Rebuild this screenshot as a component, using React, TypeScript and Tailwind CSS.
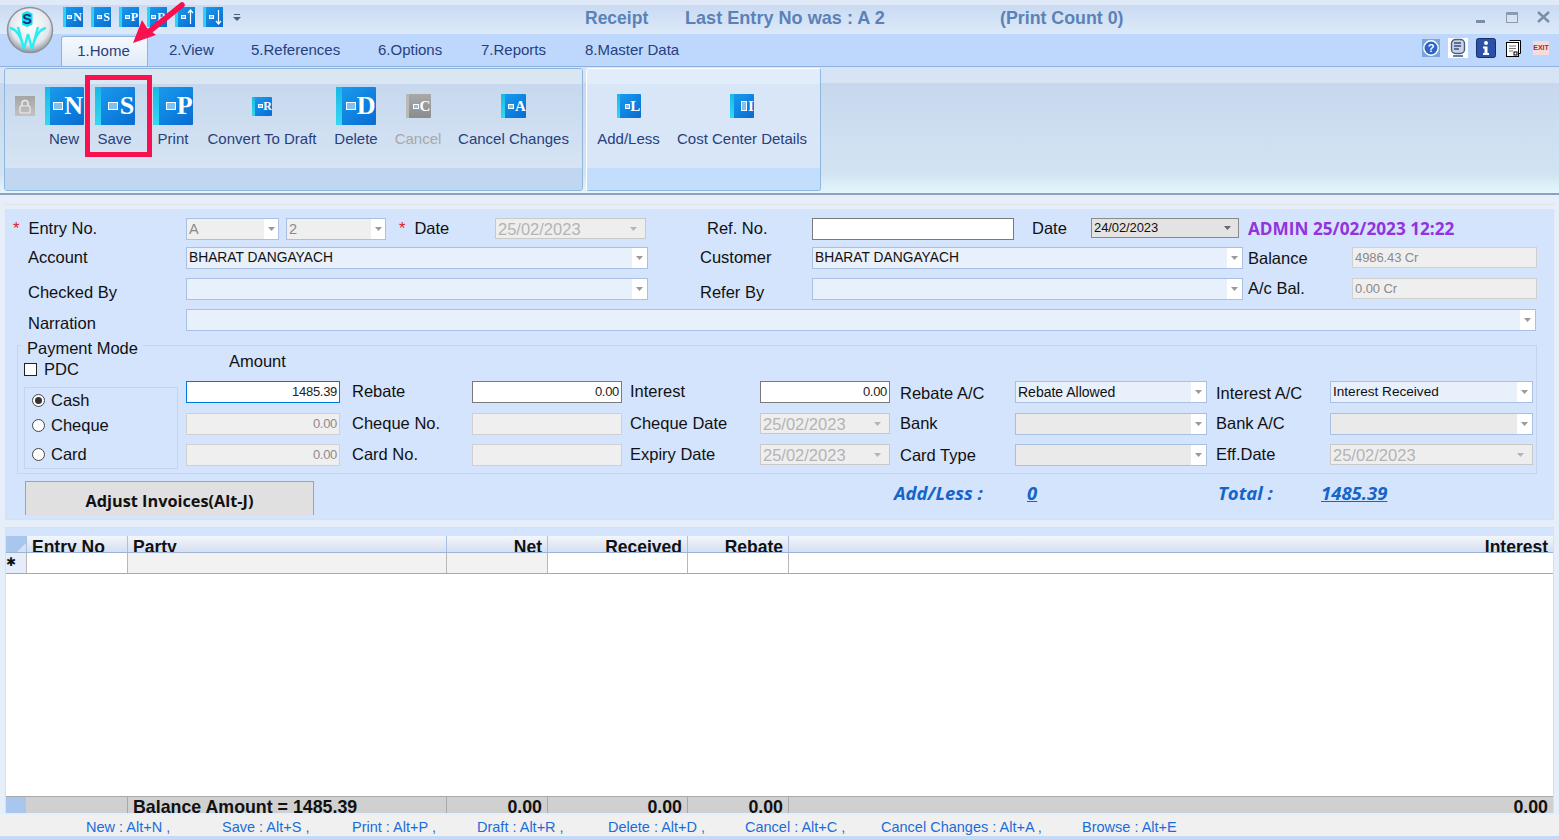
import type { ReactNode } from "react";

function Caret({ color = "#9a9a9a" }: { color?: string }) {
  return (
    <svg width="7" height="4" viewBox="0 0 7 4">
      <path d="M0 0h7L3.5 4z" fill={color} />
    </svg>
  );
}

// blue book icon from the ribbon, w/h given as classes by the caller
function BookIcon({ box, letter, text, mark, grey }: { box: string; letter?: string; text: string; mark: string; grey?: boolean }) {
  return (
    <div className={`${box} relative flex items-center justify-end overflow-hidden rounded-[1px] ${grey ? "bg-gradient-to-b from-[#a9a9a9] to-[#8b8b8b]" : "bg-gradient-to-br from-[#1c9dee] via-[#0f86e2] to-[#0a6bd0]"}`}>
      <div className={`absolute inset-y-0 left-0 w-[15%] ${grey ? "bg-[#b9b9b9]" : "bg-gradient-to-b from-[#17b8e8] to-[#35d8f0]"}`} />
      <div className={`${mark} mr-[3%] shrink-0 border border-white bg-[#7fc0f2]`} />
      {letter && <span className={`${text} mr-[1%] font-['Liberation_Serif',serif] font-bold leading-none text-white`}>{letter}</span>}
    </div>
  );
}

function QatIcon({ letter, arrow }: { letter?: string; arrow?: "up" | "down" }) {
  return (
    <div className="relative flex h-5 w-5 items-center justify-end bg-gradient-to-br from-[#1c9dee] to-[#0a6bd0]">
      <div className="absolute inset-y-0 left-0 w-[3px] bg-[#2fd2f2]" />
      <div className="mr-px h-[4px] w-[5px] border border-white bg-[#7fc0f2]" />
      {letter && <span className="mr-px font-['Liberation_Serif',serif] text-[12px] font-bold leading-none text-white">{letter}</span>}
      {arrow && (
        <svg width="7" height="16" viewBox="0 0 7 16" className="mr-px">
          <path d={arrow === "up" ? "M3.5 1v14M1 4l2.5-3L6 4" : "M3.5 1v14M1 12l2.5 3L6 12"} stroke="#fff" strokeWidth="1.2" fill="none" />
        </svg>
      )}
    </div>
  );
}

function RibbonBtn({ w, icon, label, dim }: { w: string; icon: ReactNode; label: string; dim?: boolean }) {
  return (
    <div className={`${w} flex shrink-0 flex-col items-center`}>
      <div className="flex h-[40px] items-center justify-center">{icon}</div>
      <div className={`mt-[4px] whitespace-nowrap text-[15px] leading-[18px] ${dim ? "text-[#a8a8a8]" : "text-[#27407c]"}`}>{label}</div>
    </div>
  );
}

function Label({ w, pl, children, color = "text-[#111]" }: { w: string; pl: string; children: ReactNode; color?: string }) {
  return <div className={`${w} ${pl} ${color} shrink-0 whitespace-nowrap text-[16.5px] leading-[22px]`}>{children}</div>;
}

// blue tinted combo with the white button strip on the right
function Combo({ w, h = "h-[22px]", value, grey, text = "text-[13.8px]" }: { w: string; h?: string; value?: string; grey?: boolean; text?: string }) {
  return (
    <div className={`${w} ${h} flex shrink-0 items-stretch border border-[#a9c0e2] ${grey ? "bg-[#eaeaea]" : "bg-[#e8f0fc]"}`}>
      <div className={`flex-1 overflow-hidden whitespace-nowrap pl-[2px] leading-[20px] text-[#111] ${text}`}>{value}</div>
      <div className="flex w-[15px] items-center justify-center bg-white">
        <Caret />
      </div>
    </div>
  );
}

function DateBox({ w, value }: { w: string; value: string }) {
  return (
    <div className={`${w} flex h-[21px] shrink-0 items-center justify-between self-start border border-[#c9c9c9] bg-[#eeeeee] pl-[2px] pr-2 text-[16.5px] leading-none text-[#b4b4b4]`}>
      <span className="pt-[2px]">{value}</span>
      <Caret color="#b5b5b5" />
    </div>
  );
}

function SmallCombo({ w, value }: { w: string; value: string }) {
  return (
    <div className={`${w} flex h-[22px] shrink-0 items-stretch border border-[#a9c0e2] bg-[#efefef] text-[14.5px] leading-[20px] text-[#8a8a8a]`}>
      <div className="flex-1 pl-[2px]">{value}</div>
      <div className="flex w-[14px] items-center justify-center bg-white">
        <Caret />
      </div>
    </div>
  );
}

function Amount({ w, value, kind }: { w: string; value?: string; kind: "focus" | "white" | "off" }) {
  const look = kind === "focus" ? "border-[#0078d7] bg-white text-[#222]" : kind === "white" ? "border-[#7a7a7a] bg-white text-[#222]" : "border-[#d0d0d0] bg-[#efefef] text-[#8c8c8c]";
  return <div className={`${w} ${look} h-[22px] shrink-0 border pr-[2px] text-right text-[13px] leading-[20px] tracking-[-0.3px]`}>{value}</div>;
}

function Radio({ on, label, top }: { on?: boolean; label: string; top: string }) {
  return (
    <div className={`${top} flex items-center`}>
      <div className="flex h-[13px] w-[13px] items-center justify-center rounded-full border border-[#444] bg-white">
        {on && <div className="h-[7px] w-[7px] rounded-full bg-[#333]" />}
      </div>
      <span className="ml-[6px] text-[16.5px] leading-[22px] text-[#111]">{label}</span>
    </div>
  );
}

const cols = ["w-[101px]", "w-[319px]", "w-[101px]", "w-[140px]", "w-[101px]", "flex-1"];
const heads = [
  { t: "Entry No", c: "pl-[5px] text-left" },
  { t: "Party", c: "pl-[5px] text-left" },
  { t: "Net", c: "pr-[5px] text-right" },
  { t: "Received", c: "pr-[5px] text-right" },
  { t: "Rebate", c: "pr-[5px] text-right" },
  { t: "Interest", c: "pr-[5px] text-right" },
];
const foots = [
  { t: "", c: "" },
  { t: "Balance Amount = 1485.39", c: "pl-[5px] text-left" },
  { t: "0.00", c: "pr-[5px] text-right" },
  { t: "0.00", c: "pr-[5px] text-right" },
  { t: "0.00", c: "pr-[5px] text-right" },
  { t: "0.00", c: "pr-[5px] text-right" },
];
const shortcuts = [
  { t: "New : Alt+N ,", w: "w-[136px]" },
  { t: "Save : Alt+S ,", w: "w-[130px]" },
  { t: "Print : Alt+P ,", w: "w-[125px]" },
  { t: "Draft : Alt+R ,", w: "w-[131px]" },
  { t: "Delete : Alt+D ,", w: "w-[137px]" },
  { t: "Cancel : Alt+C ,", w: "w-[136px]" },
  { t: "Cancel Changes : Alt+A ,", w: "w-[201px]" },
  { t: "Browse : Alt+E", w: "w-[120px]" },
];

function Logo() {
  return (
    <svg width="48" height="48" viewBox="0 0 48 48">
      <defs>
        <radialGradient id="lg" cx="50%" cy="40%" r="60%">
          <stop offset="0%" stopColor="#ffffff" />
          <stop offset="70%" stopColor="#e4e8ee" />
          <stop offset="100%" stopColor="#8f96a0" />
        </radialGradient>
      </defs>
      <circle cx="24" cy="24" r="22.5" fill="url(#lg)" stroke="#8e949c" strokeWidth="1.5" />
      <path d="M16 7.500L21 5l5.500 2.500v11L21 21l-5-2.500z" fill="#12e0ee" />
      <text x="21" y="18" textAnchor="middle" fontFamily="Liberation Sans" fontSize="14.500" fontWeight="700" fill="#1c2f7a">S</text>
      <path d="M4 22c6 1 11 8 14 21M40 22c-6 1-11 8-14 21M12 21l6 22M32 21l-6 22M22 28l-4 15M22 28l4 15" stroke="#27eef0" strokeWidth="2.400" fill="none" />
    </svg>
  );
}

export default function App() {
  return (
    <div className="relative flex h-[839px] w-[1559px] flex-col overflow-hidden bg-[#e6eefa] font-['Liberation_Sans',sans-serif]">
      {/* title bar */}
      <div className="flex h-[34px] shrink-0 items-center border-t-[5px] border-[#dfe9f7] bg-gradient-to-b from-[#c9dbf2] to-[#dde9f9] pb-[5px] pl-[63px]">
        <div className="flex w-[522px] shrink-0 items-center gap-2">
          <QatIcon letter="N" />
          <QatIcon letter="S" />
          <QatIcon letter="P" />
          <QatIcon letter="R" />
          <QatIcon arrow="up" />
          <QatIcon arrow="down" />
          <svg width="8" height="8" viewBox="0 0 8 8" className="ml-[2px]">
            <path d="M1 1h6v1H1zM0 4h8L4 8z" fill="#4f5f78" />
          </svg>
        </div>
        <div className="mt-[3px] w-[100px] shrink-0 text-[17.5px] font-bold text-[#5b82b8]">Receipt</div>
        <div className="mt-[3px] w-[315px] shrink-0 text-[18.1px] font-bold text-[#5b82b8]">Last Entry No was : A 2</div>
        <div className="mt-[3px] w-[476px] shrink-0 text-[17.8px] font-bold text-[#5b82b8]">(Print Count 0)</div>
        <div className="flex shrink-0 items-center">
          <div className="mt-[9px] h-[3px] w-[9px] bg-[#7d8da3]" />
          <div className="ml-[21px] h-[11px] w-[12px] border border-[#8b9bb0] border-t-[3px] bg-[#d7e3f3]" />
          <svg width="13" height="12" viewBox="0 0 13 12" className="ml-[19px]">
            <path d="M1 1l11 10M12 1L1 11" stroke="#7d8da3" strokeWidth="2.400" />
          </svg>
        </div>
      </div>

      {/* tabs */}
      <div className="flex h-[32px] shrink-0 items-end bg-[#bdd8fc] pl-[61px] text-[15px] text-[#27407c]">
        <div className="flex h-[30px] w-[87px] shrink-0 items-center justify-center rounded-t-[3px] border border-b-0 border-[#8fb2e0] bg-gradient-to-b from-[#f6f9fd] to-[#e0ebf8] pb-[1px] pr-[2px]">1.Home</div>
        <div className="flex h-[30px] items-center pb-[1px] pl-[21px]">
          <span className="w-[82px]">2.View</span>
          <span className="w-[127px]">5.References</span>
          <span className="w-[103px]">6.Options</span>
          <span className="w-[104px]">7.Reports</span>
          <span className="w-[838px]">8.Master Data</span>
        </div>
        <div className="mb-[8px] flex items-center">
          <svg width="18" height="18" viewBox="0 0 18 18" className="-ml-[1px]">
            <rect width="18" height="18" fill="#7aa5d6" />
            <circle cx="9" cy="9" r="7.200" fill="#2f63c8" stroke="#fff" strokeWidth="1.400" />
            <text x="9" y="13" textAnchor="middle" fontFamily="Liberation Sans" fontSize="11" fontWeight="700" fill="#fff">?</text>
          </svg>
          <svg width="20" height="20" viewBox="0 0 20 20" className="ml-[8px]">
            <rect width="20" height="20" fill="#fff" />
            <rect x="3.500" y="1.500" width="13" height="14" rx="4" fill="#c7d3e8" stroke="#4c5f86" strokeWidth="1.400" />
            <path d="M6 5h7M6 8h7M6 11h5M5 18h10" stroke="#3f4f74" strokeWidth="1.400" />
          </svg>
          <svg width="20" height="20" viewBox="0 0 20 20" className="ml-[8px]">
            <rect x=".5" y=".5" width="19" height="19" rx="2" fill="#2a50a8" stroke="#1a2e66" />
            <circle cx="10" cy="5" r="2" fill="#fff" />
            <path d="M7 8.500h4.500V15H13v2H7v-2h1.500v-4.500H7z" fill="#fff" />
          </svg>
          <svg width="15" height="17" viewBox="0 0 15 17" className="ml-[10px]">
            <path d="M3.500.5h11v13h-2" fill="#fff" stroke="#000" />
            <rect x=".5" y="2.500" width="12" height="14" fill="#fff" stroke="#000" />
            <path d="M3 6h7M3 8.500h7M3 11h4" stroke="#777" />
            <rect x="8" y="12" width="3" height="3" fill="#fff" stroke="#000" />
          </svg>
          <div className="ml-[12px] flex h-[14px] w-[16px] items-center justify-center bg-[#f4dcdc] text-[7px] font-bold text-[#b3232b]">EXIT</div>
        </div>
      </div>

      {/* ribbon */}
      <div className="flex h-[129px] shrink-0 items-start gap-[3px] border-t border-b-2 border-t-[#8fb2e0] border-b-[#8d9fc2] bg-[linear-gradient(#d6e4f5_0,#d6e4f5_16px,#c7d8ee_16px,#d2e4f3_85%,#e4f6fb_100%)] pl-[4px] pt-[1px]">
        <div className="h-[123px] w-[579px] shrink-0 overflow-hidden rounded-[3px] border border-[#8fb6dc]">
          <div className="flex h-[99px] items-start bg-[linear-gradient(#dbe6f3_0,#dbe6f3_15px,#c7d8ee_15px,#d6e4f3_100%)] pl-[10px] pt-[17px]">
            <div className="mt-[10px] flex h-5 w-5 shrink-0 items-center justify-center bg-gradient-to-b from-[#a5a5a5] to-[#c2c2c2]">
              <svg width="14" height="15" viewBox="0 0 14 15">
                <path d="M4 7V4.500a3 3 0 0 1 6 0V7" stroke="#eee" strokeWidth="1.400" fill="none" />
                <rect x="2" y="7" width="10" height="7" rx="1" fill="none" stroke="#eee" strokeWidth="1.200" />
              </svg>
            </div>
            <div className="ml-[5px] flex">
              <RibbonBtn w="w-[48px]" label="New" icon={<BookIcon box="h-[38px] w-[39px]" letter="N" mark="h-[8px] w-[10px]" text="text-[26px]" />} />
              <RibbonBtn w="w-[53px]" label="Save" icon={<BookIcon box="h-[38px] w-[40px]" letter="S" mark="h-[8px] w-[10px]" text="text-[26px]" />} />
              <RibbonBtn w="w-[64px]" label="Print" icon={<BookIcon box="h-[38px] w-[40px]" letter="P" mark="h-[8px] w-[10px]" text="text-[26px]" />} />
              <RibbonBtn w="w-[114px]" label="Convert To Draft" icon={<BookIcon box="h-[19px] w-[20px]" letter="R" mark="h-[4px] w-[5px]" text="text-[12px]" />} />
              <RibbonBtn w="w-[74px]" label="Delete" icon={<BookIcon box="h-[38px] w-[40px]" letter="D" mark="h-[8px] w-[10px]" text="text-[26px]" />} />
              <RibbonBtn w="w-[50px]" label="Cancel" dim icon={<BookIcon grey box="h-[24px] w-[25px]" letter="C" mark="h-[5px] w-[6px]" text="text-[15px]" />} />
              <div className="ml-[14px]">
                <RibbonBtn w="w-[113px]" label="Cancel Changes" icon={<BookIcon box="h-[24px] w-[25px]" letter="A" mark="h-[5px] w-[6px]" text="text-[15px]" />} />
              </div>
            </div>
          </div>
          <div className="h-[23px] bg-[#c1d6f0]" />
        </div>
        <div className="h-[123px] w-[235px] shrink-0 overflow-hidden rounded-[3px] border border-[#8fb6dc] border-l-white border-t-white">
          <div className="flex h-[99px] items-start bg-[linear-gradient(#e2edfb_0,#e2edfb_15px,#d8e6f8_15px,#d8e6f8_100%)] pl-[10px] pt-[17px]">
            <RibbonBtn w="w-[63px]" label="Add/Less" icon={<BookIcon box="h-[24px] w-[24px]" letter="L" mark="h-[5px] w-[5px]" text="text-[15px]" />} />
            <div className="ml-[17px]">
              <RibbonBtn w="w-[130px]" label="Cost Center Details" icon={<BookIcon box="h-[24px] w-[24px]" letter="I" mark="h-[10px] w-[6px]" text="text-[15px]" />} />
            </div>
          </div>
          <div className="h-[23px] bg-[#c3defc]" />
        </div>
      </div>

      {/* thin strip between ribbon and form */}
      <div className="mx-[5px] mt-[9px] h-[6px] shrink-0 border-y border-[#dfe3e8]" />

      {/* form */}
      <div className="mx-[5px] h-[310px] shrink-0 border-x border-b border-[#d8e0ea] bg-[#d4e4fd] pt-[8px]">
        <div className="flex h-[22px]">
          <Label w="w-[180px]" pl="-mt-[1px] pl-[7px]">
            <span className="mr-[9px] text-[#e0202c]">*</span>Entry No.
          </Label>
          <SmallCombo w="w-[93px]" value="A" />
          <div className="w-[7px] shrink-0" />
          <SmallCombo w="w-[100px]" value="2" />
          <Label w="w-[109px]" pl="-mt-[1px] pl-[13px]">
            <span className="mr-[9px] text-[#e0202c]">*</span>Date
          </Label>
          <DateBox w="w-[151px]" value="25/02/2023" />
          <Label w="w-[166px]" pl="-mt-[1px] pl-[61px]">Ref. No.</Label>
          <div className="h-[22px] w-[202px] shrink-0 border border-[#7a7a7a] bg-white" />
          <Label w="w-[77px]" pl="-mt-[1px] pl-[18px]">Date</Label>
          <div className="flex h-[20px] w-[148px] shrink-0 items-center justify-between border border-[#8a8a8a] bg-[#e3e3e3] pl-[2px] pr-[7px] text-[13px] tracking-[-0.1px] text-[#111]">
            <span>24/02/2023</span>
            <Caret color="#666" />
          </div>
          <div className="ml-[9px] whitespace-nowrap font-['Open_Sans',sans-serif] text-[17.2px] font-bold leading-[22px] text-[#9333dd]">ADMIN 25/02/2023 12:22</div>
        </div>
        <div className="mt-[7px] flex h-[22px]">
          <Label w="w-[180px]" pl="-mt-[1px] pl-[22px]">Account</Label>
          <Combo w="w-[462px]" value="BHARAT DANGAYACH" />
          <Label w="w-[164px]" pl="-mt-[1px] pl-[52px]">Customer</Label>
          <Combo w="w-[431px]" value="BHARAT DANGAYACH" />
          <Label w="w-[109px]" pl="pl-[5px]">Balance</Label>
          <div className="h-[21px] w-[185px] shrink-0 border border-[#d0d0d0] bg-[#efefef] pl-[2px] text-[13px] leading-[20px] tracking-[-0.1px] text-[#8a8a8a]">4986.43 Cr</div>
        </div>
        <div className="mt-[9px] flex h-[22px]">
          <Label w="w-[180px]" pl="pl-[22px]"><span className="relative top-[3px]">Checked By</span></Label>
          <Combo w="w-[462px]" />
          <Label w="w-[164px]" pl="pl-[52px]"><span className="relative top-[3px]">Refer By</span></Label>
          <Combo w="w-[431px]" />
          <Label w="w-[109px]" pl="-mt-[1px] pl-[5px]">A/c Bal.</Label>
          <div className="h-[21px] w-[185px] shrink-0 border border-[#d0d0d0] bg-[#efefef] pl-[2px] text-[13px] leading-[20px] tracking-[-0.1px] text-[#8a8a8a]">0.00 Cr</div>
        </div>
        <div className="mt-[9px] flex h-[22px]">
          <Label w="w-[180px]" pl="pl-[22px]"><span className="relative top-[3px]">Narration</span></Label>
          <Combo w="w-[1350px]" />
        </div>

        {/* payment mode group */}
        <div className="relative ml-[11px] mt-[14px] flex h-[129px] w-[1520px] border border-[#c4d4ec]">
          <div className="absolute -top-[8px] left-[4px] bg-[#d4e4fd] px-[5px] text-[16.5px] leading-[20px] text-[#111]">Payment Mode</div>
          <div className="ml-[6px] w-[154px] shrink-0 pt-[16px]">
            <div className="flex h-[14px] items-center">
              <div className="h-[13px] w-[13px] border border-[#222] bg-white" />
              <span className="ml-[7px] text-[16.5px] text-[#111]">PDC</span>
            </div>
            <div className="mt-[11px] flex h-[82px] flex-col border border-[#c4d4ec] pl-[7px]">
              <Radio on label="Cash" top="mt-[1px]" />
              <Radio label="Cheque" top="mt-[3px]" />
              <Radio label="Card" top="mt-[7px]" />
            </div>
          </div>
          <div className="ml-[8px] flex-1">
            <div className="h-[35px] pl-[43px] pt-[4px] text-[16.5px] leading-[22px] text-[#111]">Amount</div>
            <div className="flex h-[22px]">
              <Amount w="w-[154px]" value="1485.39" kind="focus" />
              <Label w="w-[132px]" pl="pl-[12px]"><span className="relative -top-[1px]">Rebate</span></Label>
              <Amount w="w-[150px]" value="0.00" kind="white" />
              <Label w="w-[138px]" pl="pl-[8px]"><span className="relative -top-[1px]">Interest</span></Label>
              <Amount w="w-[130px]" value="0.00" kind="white" />
              <Label w="w-[125px]" pl="pl-[10px]"><span className="relative top-[1px]">Rebate A/C</span></Label>
              <Combo w="w-[192px]" value="Rebate Allowed" text="text-[14px]" />
              <Label w="w-[123px]" pl="pl-[9px]"><span className="relative top-[1px]">Interest A/C</span></Label>
              <Combo w="w-[203px]" value="Interest Received" text="text-[13.6px]" />
            </div>
            <div className="mt-[10px] flex h-[22px]">
              <Amount w="w-[154px]" value="0.00" kind="off" />
              <Label w="w-[132px]" pl="-mt-[1px] pl-[12px]">Cheque No.</Label>
              <Amount w="w-[150px]" kind="off" />
              <Label w="w-[138px]" pl="-mt-[1px] pl-[8px]">Cheque Date</Label>
              <DateBox w="w-[130px]" value="25/02/2023" />
              <Label w="w-[125px]" pl="-mt-[1px] pl-[10px]">Bank</Label>
              <Combo w="w-[192px]" grey />
              <Label w="w-[123px]" pl="-mt-[1px] pl-[9px]">Bank A/C</Label>
              <Combo w="w-[203px]" grey />
            </div>
            <div className="mt-[9px] flex h-[22px]">
              <Amount w="w-[154px]" value="0.00" kind="off" />
              <Label w="w-[132px]" pl="-mt-[1px] pl-[12px]">Card No.</Label>
              <Amount w="w-[150px]" kind="off" />
              <Label w="w-[138px]" pl="-mt-[1px] pl-[8px]">Expiry Date</Label>
              <DateBox w="w-[130px]" value="25/02/2023" />
              <Label w="w-[125px]" pl="pl-[10px]">Card Type</Label>
              <Combo w="w-[192px]" grey />
              <Label w="w-[123px]" pl="-mt-[1px] pl-[9px]">Eff.Date</Label>
              <DateBox w="w-[203px]" value="25/02/2023" />
            </div>
          </div>
        </div>

        <div className="mt-[7px] flex h-[34px] items-center pl-[19px]">
          <div className="flex h-[34px] w-[289px] shrink-0 items-center justify-center border-x border-t border-[#a3a3a3] bg-[#e0e0e0] pt-[6px] font-['Open_Sans',sans-serif] text-[16.3px] font-bold text-[#111]">Adjust Invoices(Alt-J)</div>
          <div className="-mt-[10px] flex items-center font-['Open_Sans',sans-serif] text-[18.5px] font-bold italic text-[#1565c8]">
            <span className="ml-[580px] w-[133px] shrink-0">Add/Less :</span>
            <span className="w-[191px] shrink-0 underline">0</span>
            <span className="w-[103px] shrink-0">Total :</span>
            <span className="underline">1485.39</span>
          </div>
        </div>
      </div>

      {/* grid */}
      <div className="mx-[5px] mt-[7px] h-[286px] shrink-0 border-x border-t border-[#d8e0ea] bg-[#d4e4fd] pt-[8px]">
        <div className="flex h-full flex-col bg-white">
          <div className="flex h-[17px] shrink-0 overflow-hidden border-b border-[#9db4d4] bg-gradient-to-b from-[#f3f6fb] to-[#d5dff0] text-[17.5px] font-bold text-[#111]">
            <div className="relative h-full w-[20px] shrink-0 bg-[#a9c6ee]">
              <div className="absolute bottom-0 right-0 border-b-[9px] border-l-[9px] border-b-[#d5e0f2] border-l-transparent" />
            </div>
            {heads.map((h, i) => (
              <div key={h.t} className={`${cols[i]} ${h.c} shrink-0 overflow-hidden border-l border-[#a9c0e0] leading-[22px]`}>{h.t}</div>
            ))}
          </div>
          <div className="flex h-[21px] shrink-0 border-b border-[#a8a8a8]">
            <div className="w-[20px] shrink-0 bg-[#e4edf9] font-['DejaVu_Sans',sans-serif] text-[12px] leading-[19px] text-[#111]">✱</div>
            {cols.map((c, i) => (
              <div key={c + i} className={`${c} shrink-0 border-l border-[#b8b8b8] ${i === 1 || i === 2 ? "bg-[#f2f2f2]" : "bg-white"}`} />
            ))}
          </div>
          <div className="flex-1" />
          <div className="flex h-[17px] shrink-0 overflow-hidden border-t border-[#a8a8a8] bg-[#d0d0d0] text-[17.8px] font-bold text-[#111]">
            <div className="w-[20px] shrink-0 bg-[#a9c6ee]" />
            {foots.map((f, i) => (
              <div key={i} className={`${cols[i]} ${f.c} shrink-0 overflow-hidden leading-[20px] ${i > 0 ? "border-l border-[#a8a8a8]" : ""}`}>{f.t}</div>
            ))}
          </div>
        </div>
      </div>

      {/* shortcut bar */}
      <div className="mt-[2px] flex h-[24px] shrink-0 items-center border-b-[3px] border-[#c4dbf8] bg-[#f0f0f0] pl-[86px] pt-[5px] text-[14.5px] text-[#1a6dd8]">
        {shortcuts.map((s) => (
          <div key={s.t} className={`${s.w} shrink-0 whitespace-nowrap`}>{s.t}</div>
        ))}
      </div>

      {/* things lying on top: logo and the tutorial markup */}
      <div className="absolute left-[6px] top-[6px]">
        <Logo />
      </div>
      <div className="absolute left-[85px] top-[75px] h-[82px] w-[67px] border-[5px] border-[#f8104f]" />
      <svg width="60" height="50" viewBox="0 0 60 50" className="absolute left-[130px] top-0">
        <path d="M52 5L16 34" stroke="#f8104f" strokeWidth="5.500" strokeLinecap="round" />
        <path d="M3 43l9-23 5 8 9 7z" fill="#f8104f" />
      </svg>
    </div>
  );
}
